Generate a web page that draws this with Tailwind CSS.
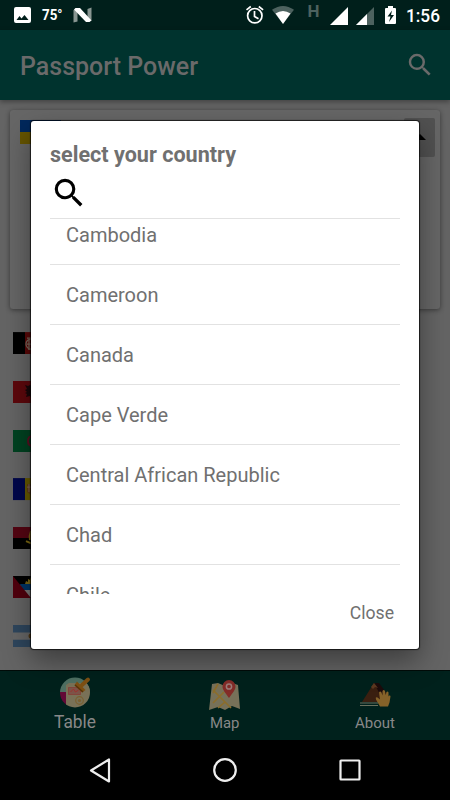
<!DOCTYPE html>
<html lang="en">
<head>
<meta charset="utf-8">
<title>Passport Power</title>
<script src="https://cdn.jsdelivr.net/npm/@tailwindcss/browser@4"></script>
</head>
<body class="bg-black font-['Roboto',sans-serif]">
<div class="relative flex h-[800px] w-[450px] flex-col overflow-hidden">
  <!-- Status bar -->
  <header class="flex h-[30px] shrink-0 bg-[#001f1b] text-white">
    <svg class="h-[30px] w-[450px]" viewBox="0 0 450 30" fill="#fff">
      <path fill-rule="evenodd" d="M16 7h13q2 0 2 2v12q0 2-2 2H16q-2 0-2-2V9q0-2 2-2zM16.500 20h12l-4-5-3 3.500-2-2.500z"/>
      <text x="42" y="20" font-size="14" font-weight="700" textLength="20.500" lengthAdjust="spacingAndGlyphs">75°</text>
      <path d="M73.500 10l4-1.500v13l-4 1zM87.500 9l4-1.500v13l-4 1.500z" fill="#899692"/>
      <path d="M74 9.500l1.500-1.500H80l11.500 12.500-2 1.500H86z"/>
      <g fill="none" stroke="#fff" stroke-width="1.700"><circle cx="254.800" cy="15.700" r="7.200"/><path d="M254.500 11v5.500l4 2.300M246.500 9.800l4.300-3.300M258.800 6.500l4.300 3.300"/></g>
      <path d="M272 9.800q11-7.600 22 0l-11 14z" fill="#4d625f"/><path d="M275.500 13.500q7.500-5 15 0L283 24z"/>
      <text x="307.500" y="17" font-size="17" font-weight="700" fill="#4d625f" textLength="12" lengthAdjust="spacingAndGlyphs">H</text>
      <path d="M348 7v18h-18z"/><path d="M374 7v18h-18z" fill="#4d625f"/><path d="M367 14v11h-11z"/>
      <path fill-rule="evenodd" d="M386 8h2V6h5v2h2q1 0 1 1v14q0 1-1 1h-9q-1 0-1-1V9q0-1 1-1zM392 10.500l-4.500 6h3L389 22l5-7h-3z"/>
      <text x="406" y="22" font-size="18.500" font-weight="500" textLength="34" lengthAdjust="spacingAndGlyphs">1:56</text>
    </svg>
  </header>
  <!-- App bar -->
  <div class="z-0 flex h-[70px] shrink-0 items-center justify-between bg-[#00332e] pr-[15px] pl-5 text-[#6a6a6a] shadow-[0_2px_5px_rgba(0,0,0,.35)]">
    <h1 class="pt-[3px] text-[25px] font-medium"><svg class="block h-[34px] w-[180px] overflow-visible" fill="currentColor"><text x="0" y="25" textLength="178" lengthAdjust="spacingAndGlyphs">Passport Power</text></svg></h1>
    <svg class="h-[30px] w-[30px]" viewBox="0 0 24 24" fill="currentColor"><path d="M15.500 14h-.79l-.28-.27A6.470 6.470 0 0 0 16 9.500 6.500 6.500 0 1 0 9.500 16c1.610 0 3.090-.59 4.230-1.570l.27.28v.79l5 4.990L20.490 19l-4.990-5zm-6 0C7.010 14 5 11.990 5 9.500S7.010 5 9.500 5 14 7.010 14 9.500 11.990 14 9.500 14z"/></svg>
  </div>
  <!-- Page behind the dialog -->
  <main class="flex h-[570px] shrink-0 flex-col bg-[#646464] px-[10px] pt-[10px]">
    <section class="flex h-[199px] shrink-0 items-start justify-between rounded-[3px] bg-[#666] pt-2 pr-[5px] pl-[10px] shadow-[0_1px_5px_rgba(0,0,0,.45)]">
      <div class="mt-0.5 flex h-6 w-[41px] flex-col"><div class="h-3 bg-[#00285c]"></div><div class="h-3 bg-[#665500]"></div></div>
      <div class="flex h-[39px] w-[31px] items-center justify-center rounded-[2px] bg-[#515151]"><svg class="h-2 w-5" viewBox="0 0 20 8"><path d="M4 6l6-6 6 6z"/></svg></div>
    </section>
    <ul class="mt-[23px] ml-[3px] flex flex-col gap-[26.600px]">
      <li class="h-[22.200px]"><svg width="34" height="22.200" viewBox="0 0 34 22"><path d="M0 0h12v22H0z"/><path fill="#590808" d="M12 0h12v22H12z"/><path fill="#00351c" d="M24 0h10v22H24z"/><g fill="none" stroke="#75665a" stroke-width="1.300"><circle cx="18" cy="12" r="5"/><path d="M14 6h8M14 12h6M15 17h6M16 8v8"/></g></svg></li>
      <li class="h-[22.200px]"><svg width="34" height="22.200" viewBox="0 0 34 22"><path fill="#5d080c" d="M0 0h34v22H0z"/><path fill="#170708" d="M12 4l3 1 2-1 2 1 4-1v8l-2 2-2 4-2-3-4 1 1-3-2-1 2-1-2-2 2-1z"/></svg></li>
      <li class="h-[22.200px]"><svg width="34" height="22.200" viewBox="0 0 34 22"><path fill="#004221" d="M0 0h34v22H0z"/><path d="M20 6q-5 0-5 5t5 5" fill="none" stroke="#590f20" stroke-width="2"/></svg></li>
      <li class="h-[22.200px]"><svg width="34" height="22.200" viewBox="0 0 34 22"><path fill="#00074b" d="M0 0h12v22H0z"/><path fill="#665900" d="M12 0h12v22H12z"/><path fill="#603c13" d="M14 6h8v7l-4 4-4-3z"/><path stroke="#7e665a" d="M14 9h8M16 6v8"/></svg></li>
      <li class="h-[22.200px]"><svg width="34" height="22.200" viewBox="0 0 34 22"><path fill="#540512" d="M0 0h34v11H0z"/><path d="M0 11h34v11H0z"/><path fill="none" stroke="#7c6812" stroke-width="2" d="M18 4q-2 5-1 9M13 14l7 3"/></svg></li>
      <li class="h-[22.200px]"><svg width="34" height="22.200" viewBox="0 0 34 22"><path d="M0 0h34v9H0z"/><path fill="#003565" d="M7 8h24v6H9z"/><path fill="#777" d="M11 14h14l-7 8z"/><path fill="#7b6714" d="M12 8l1-3 2 1 0-3 2 1 1-3 3 7z"/><path fill="#51000d" d="M0 0l18 22H0z"/></svg></li>
      <li class="h-[22.200px]"><svg width="34" height="22.200" viewBox="0 0 34 22"><path fill="#666" d="M0 7h34v8H0z"/><path fill="#2e465d" d="M0 0h34v7.500H0zM0 14.700h34V22H0z"/><circle cx="18" cy="11" r="2.500" fill="#4e3815"/></svg></li>
    </ul>
  </main>
  <!-- Tab bar -->
  <nav class="z-0 h-[70px] shrink-0 border-t border-[#000b08] bg-[#00211c]">
    <svg class="h-[69px] w-[450px]" viewBox="0 671 450 69" fill="#888">
      <defs><clipPath id="disc"><circle cx="75" cy="692.500" r="15"/></clipPath></defs>
      <g clip-path="url(#disc)"><path fill="#4f7062" d="M60 677h30v15H60z"/><path fill="#620936" d="M60 692h7v16h-7z"/><path fill="#797157" d="M66 685l3-2h21v25H66z"/></g>
      <path d="M68.500 687.500h12v7h-12z" fill="#7d5348" stroke="#853d36" stroke-width=".8"/><path d="M70.500 692l3-3 2 3 3-2" fill="none" stroke="#a22f2c" stroke-width=".9"/>
      <circle cx="79.500" cy="700.500" r="3.800" fill="none" stroke="#7b6030" stroke-width="1.200"/><circle cx="79.500" cy="700.500" r="1.600" fill="#7b6030"/>
      <path d="M88 679.500l-6 5.500" fill="none" stroke="#7e5013" stroke-width="4" stroke-linecap="round"/>
      <path d="M77 681.500l8.500 8.500-3.500 2.500-7.500-7.500z" fill="#7e5013"/><path d="M75 685l8 7" stroke="#583409" stroke-width="1.500"/>
      <path fill="#777159" d="M212 684l6-1 7 3 7-3 6 2 2 24-8-3-7 4-7-3-9 3z"/><path fill="none" stroke="#8c6d2a" stroke-width="1.600" d="M218 684l-5 9M213 690l18 18M213 703l11-11M218 708l7-6"/>
      <path fill="#832c28" d="M229 698c-3.500-5-6.500-8-6.500-11.500a6.500 6.500 0 0 1 13 0c0 3.500-3 6.500-6.500 11.500z"/><circle cx="229" cy="686.500" r="2.600" fill="none" stroke="#9b7c78" stroke-width="1.500"/>
      <path fill="#3a1f10" d="M374 683l15 19h-27z"/><path fill="#1c0b0b" d="M374 683h5l8 11-3 8z"/><path fill="#5c3820" d="M374 683l4 5-3-1-2 2-2-2z"/><path d="M360 703h18M360 705.500h18" stroke="#69705e" stroke-width="1.200"/>
      <path fill="#856229" d="M380 706.500l-4-7q-1-3 1.500-2l2.500 2-1-7q1-2 2.500 0l1 3v-4.500q1.200-2 2.500 0l.7 4 .8-3q1.500-1 2 .5v4l.7-1q1.300-.5 1.300 1l-1 6-1.500 4z"/>
      <text x="54" y="728" font-size="18" textLength="42" lengthAdjust="spacingAndGlyphs">Table</text>
      <text x="210" y="728" font-size="15.500" textLength="29.500" lengthAdjust="spacingAndGlyphs">Map</text>
      <text x="355" y="728" font-size="15.500" textLength="40" lengthAdjust="spacingAndGlyphs">About</text>
    </svg>
  </nav>
  <!-- System navigation -->
  <footer class="flex h-[60px] shrink-0 bg-black">
    <svg class="h-[60px] w-[450px]" viewBox="0 740 450 60" fill="none" stroke="#eee" stroke-width="2.200" stroke-linejoin="round"><path d="M109 759.500v22L91 770.500z"/><circle cx="225" cy="770" r="10.800"/><rect x="340.500" y="760.500" width="19" height="19" rx=".5"/></svg>
  </footer>
  <!-- Country dialog -->
  <div role="dialog" class="absolute top-[121px] left-[31px] z-10 flex h-[528px] w-[388px] flex-col rounded-[3px] bg-white px-[19px] pt-[19px] text-[#707070] shadow-[0_0_1px_1px_rgba(0,0,0,.7),0_12px_28px_rgba(0,0,0,.4)]">
    <h2 class="h-[32px] text-[21.500px] font-bold"><svg class="block h-[32px] w-[200px] overflow-visible" fill="currentColor"><text x="0" y="22" textLength="186" lengthAdjust="spacingAndGlyphs">select your country</text></svg></h2>
    <svg class="mt-[2px] h-[38px] w-[38px] shrink-0" viewBox="0 0 24 24" fill="#000"><path d="M15.500 14h-.79l-.28-.27A6.470 6.470 0 0 0 16 9.500 6.500 6.500 0 1 0 9.500 16c1.610 0 3.090-.59 4.230-1.570l.27.28v.79l5 4.990L20.490 19l-4.990-5zm-6 0C7.010 14 5 11.990 5 9.500S7.010 5 9.500 5 14 7.010 14 9.500 11.990 14 9.500 14z"/></svg>
    <div class="mt-[6px] h-[376px] shrink-0 overflow-hidden border-t border-[#e2e2e2] text-[20px]">
      <ul class="-mt-[14px] flex flex-col">
        <li class="h-[60px] shrink-0 border-b border-[#e2e2e2] pl-4 leading-[60px]">Cambodia</li>
        <li class="h-[60px] shrink-0 border-b border-[#e2e2e2] pl-4 leading-[60px]">Cameroon</li>
        <li class="h-[60px] shrink-0 border-b border-[#e2e2e2] pl-4 leading-[60px]">Canada</li>
        <li class="h-[60px] shrink-0 border-b border-[#e2e2e2] pl-4 leading-[60px]">Cape Verde</li>
        <li class="h-[60px] shrink-0 border-b border-[#e2e2e2] pl-4 leading-[60px]">Central African Republic</li>
        <li class="h-[60px] shrink-0 border-b border-[#e2e2e2] pl-4 leading-[60px]">Chad</li>
        <li class="h-[60px] shrink-0 pl-4 leading-[60px]">Chile</li>
      </ul>
    </div>
    <button class="mt-[4px] mr-[6px] self-end text-[17.600px] leading-[30px]">Close</button>
  </div>
</div>
</body>
</html>
